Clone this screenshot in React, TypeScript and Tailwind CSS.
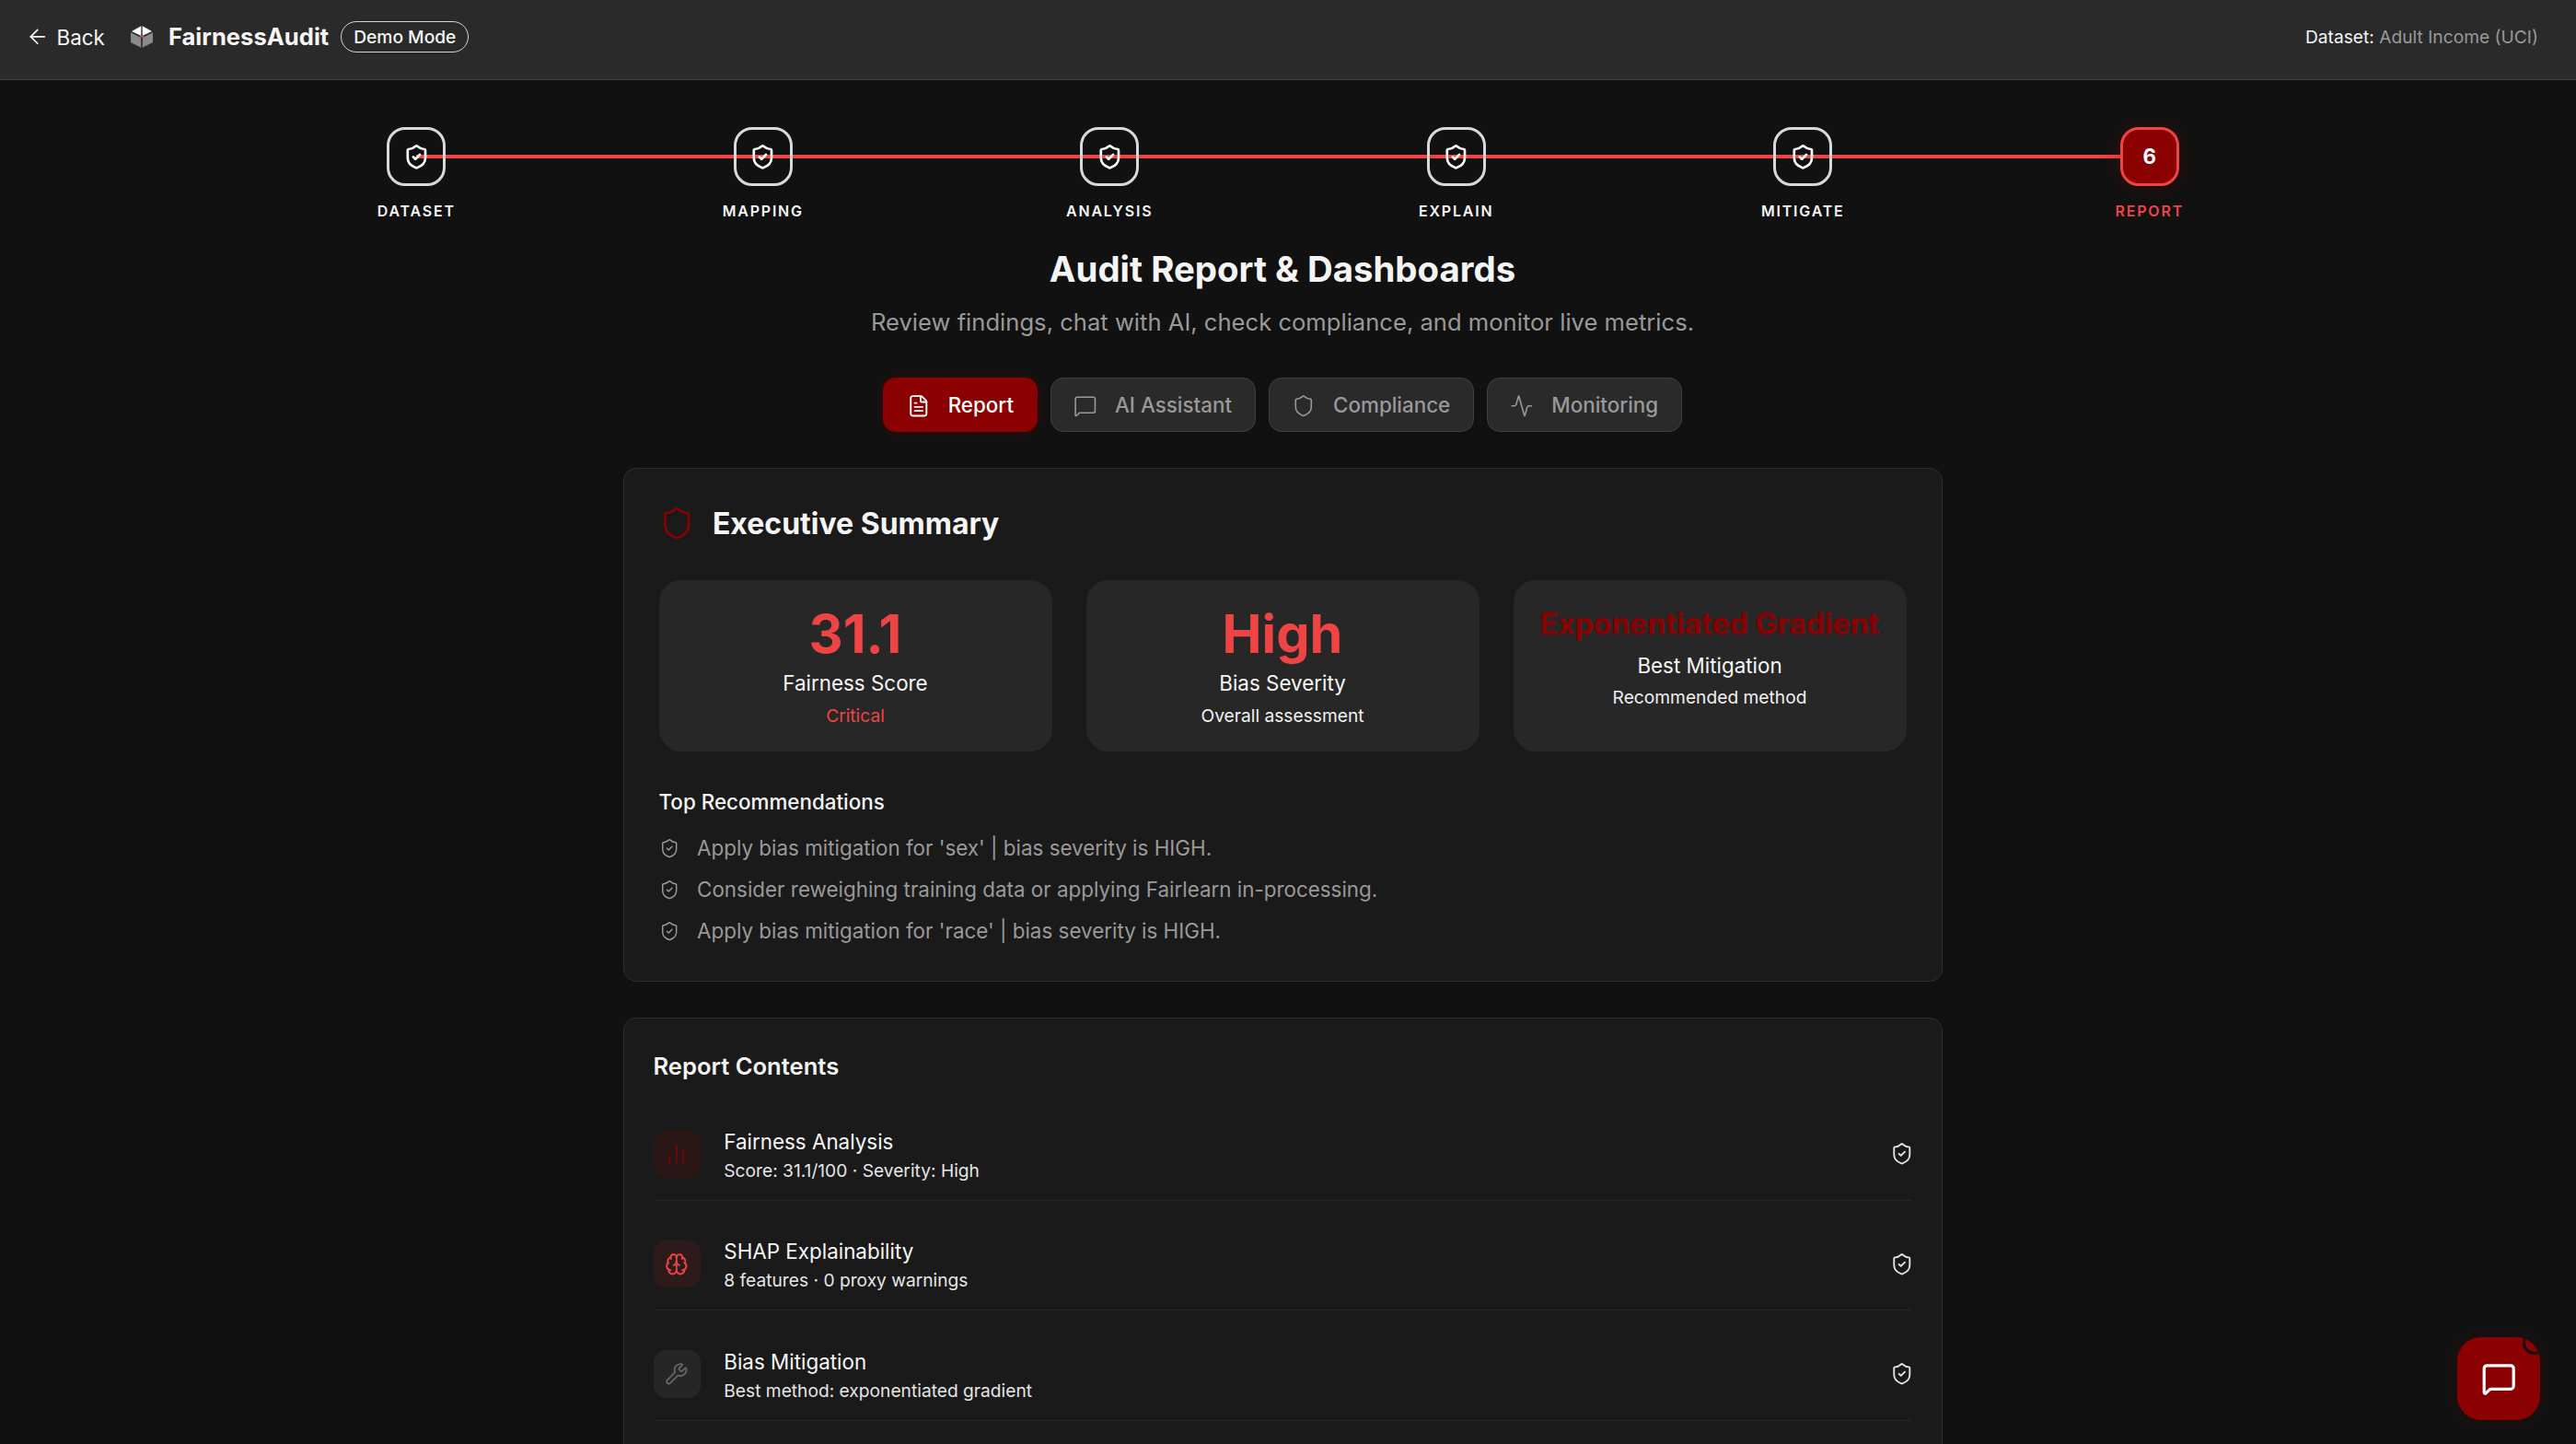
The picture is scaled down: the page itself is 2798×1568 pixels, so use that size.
import React from 'react';
import { ArrowLeft, ShieldCheck, Shield, FileText, MessageSquare, Activity, ChartNoAxesColumn, Brain, Wrench } from 'lucide-react';

const steps = ['DATASET', 'MAPPING', 'ANALYSIS', 'EXPLAIN', 'MITIGATE'];

function Logo() {
  return (
    <svg width="24" height="24" viewBox="0 0 72 72" className="shrink-0">
      <polygon points="34,1 34,26 33,32 3,18" fill="#ffffff" />
      <polygon points="38,1 38,26 39,32 69,18" fill="#ffffff" />
      <polygon points="0,22 33,38 34,71 0,54" fill="#8a8a8a" />
      <polygon points="72,22 39,38 38,71 72,54" fill="#8a8a8a" />
      <polygon points="28,35 36,31 44,35 36,39" fill="#ef4444" />
    </svg>
  );
}

function Stat({ value, small, label, note, noteRed }: { value: string; small?: boolean; label: string; note: string; noteRed?: boolean }) {
  return (
    <div className="h-[186px] rounded-[24px] bg-[#272727] pt-[28px] text-center">
      {small ? (
        <div className="h-[40px] text-[32px] font-bold leading-[40px] text-[#8b0000] whitespace-nowrap">{value}</div>
      ) : (
        <div className="h-[60px] text-[57.6px] font-bold leading-[60px] text-[#ef4444]">{value}</div>
      )}
      <div className={`${small ? 'mt-[7px]' : 'mt-[6px]'} text-[22.4px] leading-[35px] text-[#f5f5f5]`}>{label}</div>
      <div className={`${small ? 'mt-[3px]' : 'mt-[4px]'} text-[19.2px] leading-[28px] ${noteRed ? 'text-[#ef4444]' : 'text-[#f0f0f0]'}`}>{note}</div>
    </div>
  );
}

function Rec({ text }: { text: string }) {
  return (
    <div className="flex h-[45px] items-center gap-[19.2px]">
      <ShieldCheck size={22.4} strokeWidth={1.6} className="mt-[2px] shrink-0 text-[#999999]" />
      <span className="text-[22.4px] leading-[35px] text-[#999999]">{text}</span>
    </div>
  );
}

function Row({ icon, boxCls, title, sub }: { icon: React.ReactNode; boxCls: string; title: string; sub: string }) {
  return (
    <div className="flex items-center border-b border-[#262626] pb-[18px] pt-[37.5px]">
      <div className={`flex h-[51.2px] w-[51.2px] shrink-0 items-center justify-center rounded-[14px] ${boxCls}`}>{icon}</div>
      <div className="ml-[25.6px] flex-1">
        <div className="text-[22.4px] leading-[35px] text-[#f5f5f5]">{title}</div>
        <div className="text-[19.2px] leading-[28px] text-[#e5e5e5]">{sub}</div>
      </div>
      <ShieldCheck size={25.6} strokeWidth={1.75} className="mr-[-2px] shrink-0 text-[#e5e5e5]" />
    </div>
  );
}

function Tab({ icon, label, active }: { icon: React.ReactNode; label: string; active?: boolean }) {
  return (
    <div
      className={
        active
          ? 'flex h-[59px] items-center gap-[19.2px] rounded-[14px] bg-[#8b0000] px-[25.6px] text-[22.4px] font-medium text-white shadow-[0_0_14px_rgba(139,0,0,0.25)]'
          : 'flex h-[59px] items-center gap-[19.2px] rounded-[14px] border border-[#404040] bg-[#2a2a2a] px-[24.6px] text-[22.4px] font-medium text-[#999999]'
      }
    >
      <span className="mt-[2px] shrink-0">{icon}</span>
      {label}
    </div>
  );
}

export default function App() {
  return (
    <div className="h-screen overflow-hidden bg-[#111111] font-['Inter','Liberation_Sans',sans-serif] text-white">
      <header className="flex h-[87px] items-center justify-between border-b border-[#404040] bg-[#2a2a2a] pb-[6px] pl-[28px] pr-[41px]">
        <div className="flex items-center">
          <ArrowLeft size={25.6} strokeWidth={1.6} className="text-[#f5f5f5]" />
          <span className="ml-[8px] text-[22.4px] leading-[35px] text-[#f5f5f5]">Back</span>
          <span className="ml-[28px]"><Logo /></span>
          <span className="ml-[17px] text-[25.6px] font-bold leading-[40px] text-[#f5f5f5]">FairnessAudit</span>
          <span className="ml-[13px] flex h-[34px] items-center rounded-full border border-[#d4d4d4] px-[13px] text-[19.2px] font-medium text-[#f5f5f5]">Demo Mode</span>
        </div>
        <div className="text-[19.2px] text-[#f5f5f5]">
          Dataset: <span className="text-[#999999]">Adult Income (UCI)</span>
        </div>
      </header>

      <main className="w-[2786px]">
        <div className="relative ml-[264px] mt-[51px] grid w-[2259px] grid-cols-6">
          <div className="absolute left-[188px] right-[188px] top-[30px] h-[4px] bg-[#ef4444]" />
          {steps.map((s) => (
            <div key={s} className="relative flex flex-col items-center">
              <div className="flex h-[64px] w-[64px] items-center justify-center rounded-[20px] border-[3px] border-[#d9d9d9]">
                <ShieldCheck size={28.8} strokeWidth={2.2} className="text-white" />
              </div>
              <div className="mt-[15px] text-[16px] font-semibold leading-[24px] tracking-[1.8px] text-[#f5f5f5]">{s}</div>
            </div>
          ))}
          <div className="relative flex flex-col items-center">
            <div className="flex h-[64px] w-[64px] items-center justify-center rounded-[20px] border-[3px] border-[#ef4444] bg-[#8b0000] text-[22.4px] font-bold text-white shadow-[0_0_20px_rgba(139,0,0,0.3)]">6</div>
            <div className="mt-[15px] text-[16px] font-semibold leading-[24px] tracking-[1.8px] text-[#ef4444]">REPORT</div>
          </div>
        </div>

        <h1 className="mt-[26px] text-center text-[38.4px] font-bold leading-[50px] text-[#f5f5f5]">Audit Report &amp; Dashboards</h1>
        <p className="mt-[13px] text-center text-[25.6px] leading-[40px] text-[#999999]">Review findings, chat with AI, check compliance, and monitor live metrics.</p>

        <div className="mt-[40px] flex justify-center gap-[14px]">
          <Tab active label="Report" icon={<FileText size={25.6} strokeWidth={1.75} />} />
          <Tab label="AI Assistant" icon={<MessageSquare size={25.6} strokeWidth={1.5} />} />
          <Tab label="Compliance" icon={<Shield size={25.6} strokeWidth={1.5} />} />
          <Tab label="Monitoring" icon={<Activity size={25.6} strokeWidth={1.5} />} />
        </div>

        <section className="mx-auto mt-[39px] w-[1433px] rounded-[14px] border border-[#2e2e2e] bg-[#1a1a1a] px-[38px] pb-[32px] pt-[39px]">
          <div className="flex h-[40px] items-center gap-[20px]">
            <Shield size={38.4} strokeWidth={1.6} className="text-[#8b0000]" />
            <h2 className="mt-[1px] text-[32px] font-bold leading-[40px] text-[#f5f5f5]">Executive Summary</h2>
          </div>
          <div className="mt-[42px] grid grid-cols-3 gap-[37px]">
            <Stat value="31.1" label="Fairness Score" note="Critical" noteRed />
            <Stat value="High" label="Bias Severity" note="Overall assessment" />
            <Stat small value="Exponentiated Gradient" label="Best Mitigation" note="Recommended method" />
          </div>
          <div className="mt-[37px] text-[22.4px] font-medium leading-[35px] text-[#f5f5f5]">Top Recommendations</div>
          <div className="mt-[10px]">
            <Rec text="Apply bias mitigation for 'sex' | bias severity is HIGH." />
            <Rec text="Consider reweighing training data or applying Fairlearn in-processing." />
            <Rec text="Apply bias mitigation for 'race' | bias severity is HIGH." />
          </div>
        </section>

        <section className="mx-auto mt-[39px] min-h-[600px] w-[1433px] rounded-[14px] border border-[#2e2e2e] bg-[#1a1a1a] px-[32px] pt-[33px]">
          <div className="mb-[7px] text-[25.6px] font-semibold leading-[38px] text-[#f5f5f5]">Report Contents</div>
          <Row title="Fairness Analysis" sub="Score: 31.1/100 · Severity: High" boxCls="bg-[#2a1616]" icon={<ChartNoAxesColumn size={25.6} strokeWidth={1.5} className="text-[#8b0000]" />} />
          <Row title="SHAP Explainability" sub="8 features · 0 proxy warnings" boxCls="bg-[#2e1a1a]" icon={<Brain size={25.6} strokeWidth={1.75} className="text-[#ef4444]" />} />
          <Row title="Bias Mitigation" sub="Best method: exponentiated gradient" boxCls="bg-[#262626]" icon={<Wrench size={25.6} strokeWidth={1.75} className="text-[#666666]" />} />
        </section>
      </main>

      <button className="fixed bottom-[26px] right-[39px] flex h-[90px] w-[90px] items-center justify-center overflow-hidden rounded-[26px] bg-[#8b0000] shadow-[0_0_0_9px_rgba(139,0,0,0.05)]">
        <MessageSquare size={38.4} strokeWidth={2} className="text-white" />
        <span className="absolute right-[-6.4px] top-[-6.4px] h-[25.6px] w-[25.6px] rounded-full border-[3.2px] border-[#111111] bg-[#8b0000]" />
      </button>
    </div>
  );
}
